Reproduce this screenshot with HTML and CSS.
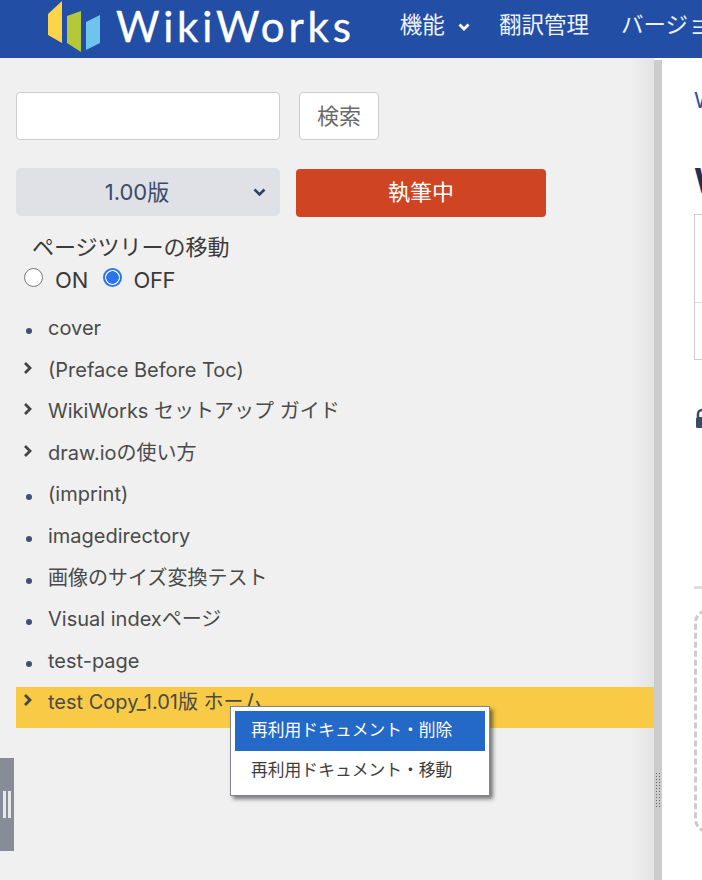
FILE: index.html
```
<!DOCTYPE html>
<html lang="ja">
<head>
<meta charset="utf-8">
<title>WikiWorks</title>
<link rel="stylesheet" href="styles.css">
</head>
<body>
<header class="topbar">
  <svg class="logo" width="60" height="54" viewBox="44 0 60 54">
    <polygon points="48,14 62,1 62,43 48,35" fill="#fbd44a"/>
    <polygon points="67,16 81,11 81,52 67,43" fill="#b4c93a"/>
    <polygon points="86,22 100,15 100,43 86,50" fill="#6fc4ee"/>
  </svg>
  <span class="brand">WikiWorks</span>
  <nav class="nav">
    <span class="nav-item">機能
      <svg class="nav-caret" width="12" height="8" viewBox="0 0 12 8"><path d="M1.5 1.5 6 6l4.500-4.500" fill="none" stroke="#fff" stroke-width="2.800"/></svg>
    </span>
    <span class="nav-item">翻訳管理</span>
    <span class="nav-item">バージョン管理</span>
  </nav>
</header>
<main class="main">
  <aside class="sidebar">
    <div class="search-row">
      <input class="search-input" type="text" aria-label="検索">
      <button class="search-btn">検索</button>
    </div>
    <div class="version-row">
      <div class="version-select">
        <span>1.00版</span>
        <svg class="select-caret" width="13" height="9" viewBox="0 0 13 9"><path d="M1.500 1.500 6.500 6.500l5-5" fill="none" stroke="#2f4163" stroke-width="2.600"/></svg>
      </div>
      <button class="status-btn">執筆中</button>
    </div>
    <div class="move-title">ページツリーの移動</div>
    <div class="radio-row">
      <span class="radio"></span><span class="radio-label on-label">ON</span>
      <span class="radio radio-checked"></span><span class="radio-label off-label">OFF</span>
    </div>
    <ul class="tree">
      <li class="tree-item"><span class="bullet"></span><span class="tree-text">cover</span></li>
      <li class="tree-item"><svg class="chev" width="10" height="14" viewBox="0 0 10 14"><path d="M2 2l5 5-5 5" fill="none" stroke="#444" stroke-width="2.800"/></svg><span class="tree-text">(Preface Before Toc)</span></li>
      <li class="tree-item"><svg class="chev" width="10" height="14" viewBox="0 0 10 14"><path d="M2 2l5 5-5 5" fill="none" stroke="#444" stroke-width="2.800"/></svg><span class="tree-text">WikiWorks セットアップ ガイド</span></li>
      <li class="tree-item"><svg class="chev" width="10" height="14" viewBox="0 0 10 14"><path d="M2 2l5 5-5 5" fill="none" stroke="#444" stroke-width="2.800"/></svg><span class="tree-text">draw.ioの使い方</span></li>
      <li class="tree-item"><span class="bullet"></span><span class="tree-text">(imprint)</span></li>
      <li class="tree-item"><span class="bullet"></span><span class="tree-text">imagedirectory</span></li>
      <li class="tree-item"><span class="bullet"></span><span class="tree-text">画像のサイズ変換テスト</span></li>
      <li class="tree-item"><span class="bullet"></span><span class="tree-text">Visual indexページ</span></li>
      <li class="tree-item"><span class="bullet"></span><span class="tree-text">test-page</span></li>
      <li class="tree-item tree-selected"><svg class="chev chev-selected" width="10" height="14" viewBox="0 0 10 14"><path d="M2 2l5 5-5 5" fill="none" stroke="#444" stroke-width="2.800"/></svg><span class="tree-text">test Copy_1.01版 ホーム</span></li>
    </ul>
    <div class="side-handle"><span></span><span></span></div>
    <div class="context-menu">
      <div class="menu-item menu-active">再利用ドキュメント・削除</div>
      <div class="menu-item">再利用ドキュメント・移動</div>
    </div>
  </aside>
  <div class="splitter"><span class="grip"></span></div>
  <section class="content">
    <div class="crumb">WikiWorks</div>
    <h1 class="page-title">WikiWorks</h1>
    <div class="info-table"><div class="info-row"></div><div class="info-row"></div></div>
    <svg class="lock" width="12" height="22" viewBox="0 0 12 22"><path d="M2 9V6a4 4 0 0 1 8 0v3" fill="none" stroke="#3a4a68" stroke-width="2.500"/><rect x="0" y="9" width="12" height="11" rx="1.500" fill="#3a4a68"/></svg>
    <div class="rule"></div>
    <div class="drop-box"></div>
  </section>
</main>
</body>
</html>
```
FILE: styles.css
```
* { box-sizing: border-box; }
html, body { margin: 0; height: 100%; overflow: hidden; }
body {
  display: flex;
  flex-direction: column;
  width: 702px;
  height: 880px;
  background: #fff;
  font-family: Inter, "Noto Sans CJK JP", sans-serif;
  color: #4a4a4a;
}
.topbar {
  flex: 0 0 58px;
  height: 58px;
  background: #224ea6;
  display: flex;
  align-items: flex-start;
  padding-left: 44px;
  color: #fff;
  white-space: nowrap;
  overflow: hidden;
}
.logo { flex: none; }
.brand {
  margin-left: 12px;
  margin-top: 3px;
  font: 400 42px/46px Lato, sans-serif;
  letter-spacing: 3.800px;
  color: #fff;
  -webkit-text-stroke: 0.400px #fff;
  flex: none;
}
.nav {
  display: flex;
  margin-left: 45px;
  margin-top: 10px;
  font-size: 22.500px;
  line-height: 30px;
  color: #eef2fb;
  flex: none;
}
.nav-item { margin-right: 32px; flex: none; }
.nav-item:first-child { margin-right: 29px; }
.nav-caret { margin-left: 7px; vertical-align: 2px; }
.main { flex: 1; display: flex; min-height: 0; position: relative; }
.sidebar {
  flex: 0 0 654px;
  width: 654px;
  background: linear-gradient(to right, #f0f0f0 0, #f0f0f0 630px, #e4e4e4 654px);
  padding: 34px 0 0 16px;
  position: relative;
}
.search-row { display: flex; gap: 19px; height: 48px; }
.search-input {
  width: 264px;
  height: 48px;
  background: #fff;
  border: 1px solid #ccc;
  border-radius: 4px;
  padding: 0 10px;
}
.search-btn {
  width: 80px;
  height: 48px;
  background: #fff;
  border: 1px solid #ccc;
  border-radius: 4px;
  color: #6b6b6b;
  font: 22px/28px "Noto Sans CJK JP", sans-serif;
  padding: 0 0 4px;
}
.version-row { display: flex; gap: 16px; margin-top: 28px; align-items: flex-start; }
.version-select {
  width: 264px;
  height: 48px;
  background: #dfe1e6;
  border-radius: 5px;
  display: flex;
  align-items: center;
  justify-content: center;
  position: relative;
  color: #3b4a69;
  font-size: 22px;
  padding: 0 22px 4px 0;
}
.select-caret { position: absolute; right: 14px; top: 20px; }
.status-btn {
  width: 250px;
  height: 48px;
  margin-top: 1px;
  background: #cf4422;
  color: #fff;
  border: 0;
  border-radius: 4px;
  font: 22px/28px Inter, "Noto Sans CJK JP", sans-serif;
  padding: 0 0 2px;
}
.move-title {
  margin: 16px 0 0 16px;
  font-size: 22px;
  line-height: 28px;
  color: #3a3a3a;
}
.radio-row { display: flex; align-items: center; height: 28px; margin: 5px 0 0 8px; font-size: 22px; color: #3a3a3a; }
.radio {
  width: 19px;
  height: 19px;
  border-radius: 50%;
  background: #fff;
  border: 1.500px solid #767676;
  margin-top: -5px;
  flex: none;
}
.radio-checked {
  border: 2px solid #2b74f0;
  background: radial-gradient(circle, #2b74f0 0, #2b74f0 6px, #fff 6.500px);
}
.radio-label { margin-left: 12px; }
.on-label { margin-right: 15px; }
.off-label { margin-left: 11px; letter-spacing: -0.300px; }
.tree { list-style: none; margin: 14px 0 0 0; padding: 0; }
.tree-item {
  position: relative;
  height: 41.600px;
  padding-left: 32px;
  font-size: 20px;
  line-height: 41px;
  color: #4a4a4a;
  white-space: nowrap;
}
.bullet {
  position: absolute;
  left: 10px;
  top: 20px;
  width: 6px;
  height: 6px;
  border-radius: 50%;
  background: #3f5077;
}
.chev { position: absolute; left: 7px; top: 11px; }
.tree-selected { background: #f8ca46; width: 638px; height: 41px; margin-top: 5px; line-height: 31px; }
.chev-selected { top: 6px; }
.side-handle {
  position: absolute;
  left: 0;
  top: 700px;
  width: 14px;
  height: 93px;
  background: #878c98;
  display: flex;
  align-items: center;
  justify-content: center;
  gap: 2px;
}
.side-handle span { width: 3px; height: 27px; background: #e8e8e8; }
.context-menu {
  position: absolute;
  left: 230px;
  top: 648px;
  width: 260px;
  height: 90px;
  background: #fff;
  border: 1px solid #80848c;
  padding: 4px;
  box-shadow: 3px 3px 4px rgba(0, 0, 0, 0.500);
}
.menu-item {
  height: 40px;
  line-height: 38px;
  padding-left: 16px;
  font-size: 16.800px;
  color: #3d3d3d;
  white-space: nowrap;
}
.menu-active { background: #2468c8; color: #fff; }
.splitter { flex: 0 0 8px; background: #ccc; position: relative; margin-top: 2px; }
.grip {
  position: absolute;
  left: 1px;
  top: 712px;
  width: 6px;
  height: 36px;
  background-image: radial-gradient(circle, #666 0, #666 1px, transparent 1px);
  background-size: 3px 3px;
}
.content { flex: 1; min-width: 0; padding: 28px 0 0 32px; overflow: hidden; background: #fff; display: flex; flex-direction: column; align-items: flex-start; }
.crumb { font-size: 22px; line-height: 28px; color: #2250b0; white-space: nowrap; }
.page-title { margin: 44px 0 0; font-size: 34px; line-height: 46px; font-weight: 700; color: #1f2f55; white-space: nowrap; }
.info-table {
  margin-top: 10px;
  width: 200px;
  height: 146px;
  border: 1px solid #ccc;
  flex: none;
  display: flex;
  flex-direction: column;
}
.info-row { flex: 0 0 88px; border-bottom: 1px solid #ddd; }
.info-row + .info-row { flex: 1; border-bottom: 0; }
.lock { margin-top: 48px; margin-left: 2px; flex: none; }
.rule { margin-top: 156px; width: 200px; height: 3px; background: #ddd; flex: none; }
.drop-box {
  margin-top: 20px;
  width: 200px;
  height: 224px;
  border: 3px dashed #ccc;
  border-radius: 14px;
  flex: none;
}
```
